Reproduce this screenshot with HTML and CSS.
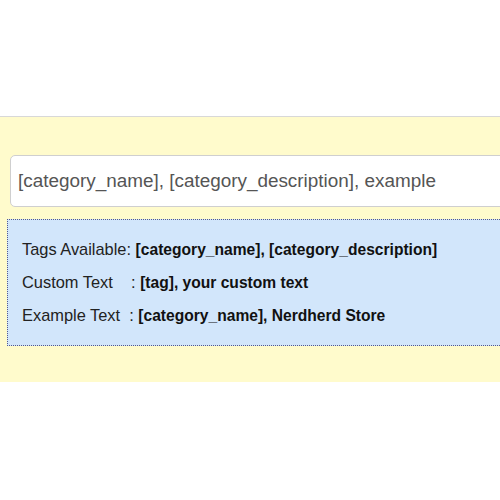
FILE: index.html
```html
<!DOCTYPE html>
<html lang="en">
<head>
    <meta charset="UTF-8">
    <title>Category title</title>
    <link rel="stylesheet" href="styles.css">
</head>
<body>
<div class="panel">
    <div class="field">[category_name], [category_description], example</div>
    <div class="help">
        <p>Tags Available: <b>[category_name], [category_description]</b></p>
        <p>Custom Text &nbsp;&nbsp;&nbsp;: <b>[tag], your custom text</b></p>
        <p>Example Text &nbsp;: <b>[category_name], Nerdherd Store</b></p>
    </div>
</div>
</body>
</html>
```

FILE: styles.css
```css
*{
    margin:0;
    padding:0;
    box-sizing:border-box;
}
html, body{
    width:500px;
    height:500px;
    overflow:hidden;
}
body{
    background:#fff;
    font-family:"Liberation Sans", Arial, sans-serif;
    padding-top:116px;
}
.panel{
    height:266px;
    background:#fffbcc;
    border-top:1px solid #d8d8d8;
    padding-top:38px;
    padding-left:7px;
    overflow:hidden;
}
.field{
    margin-left:3px;
    margin-right:-10px;
    height:52px;
    border:1px solid #cfcfcf;
    border-radius:5px;
    background:#fff;
    color:#555;
    font-size:18.9px;
    line-height:50px;
    padding-left:7px;
    white-space:nowrap;
}
.help{
    margin-top:12px;
    margin-right:-10px;
    height:127px;
    border:1px dotted #555a8c;
    background:#d2e6fb;
    color:#222;
    font-size:16.4px;
    padding:20px 0 0 14px;
    white-space:nowrap;
}
.help p{
    height:33px;
    line-height:18px;
}
.help b{
    color:#111;
    font-size:15.6px;
}
```
